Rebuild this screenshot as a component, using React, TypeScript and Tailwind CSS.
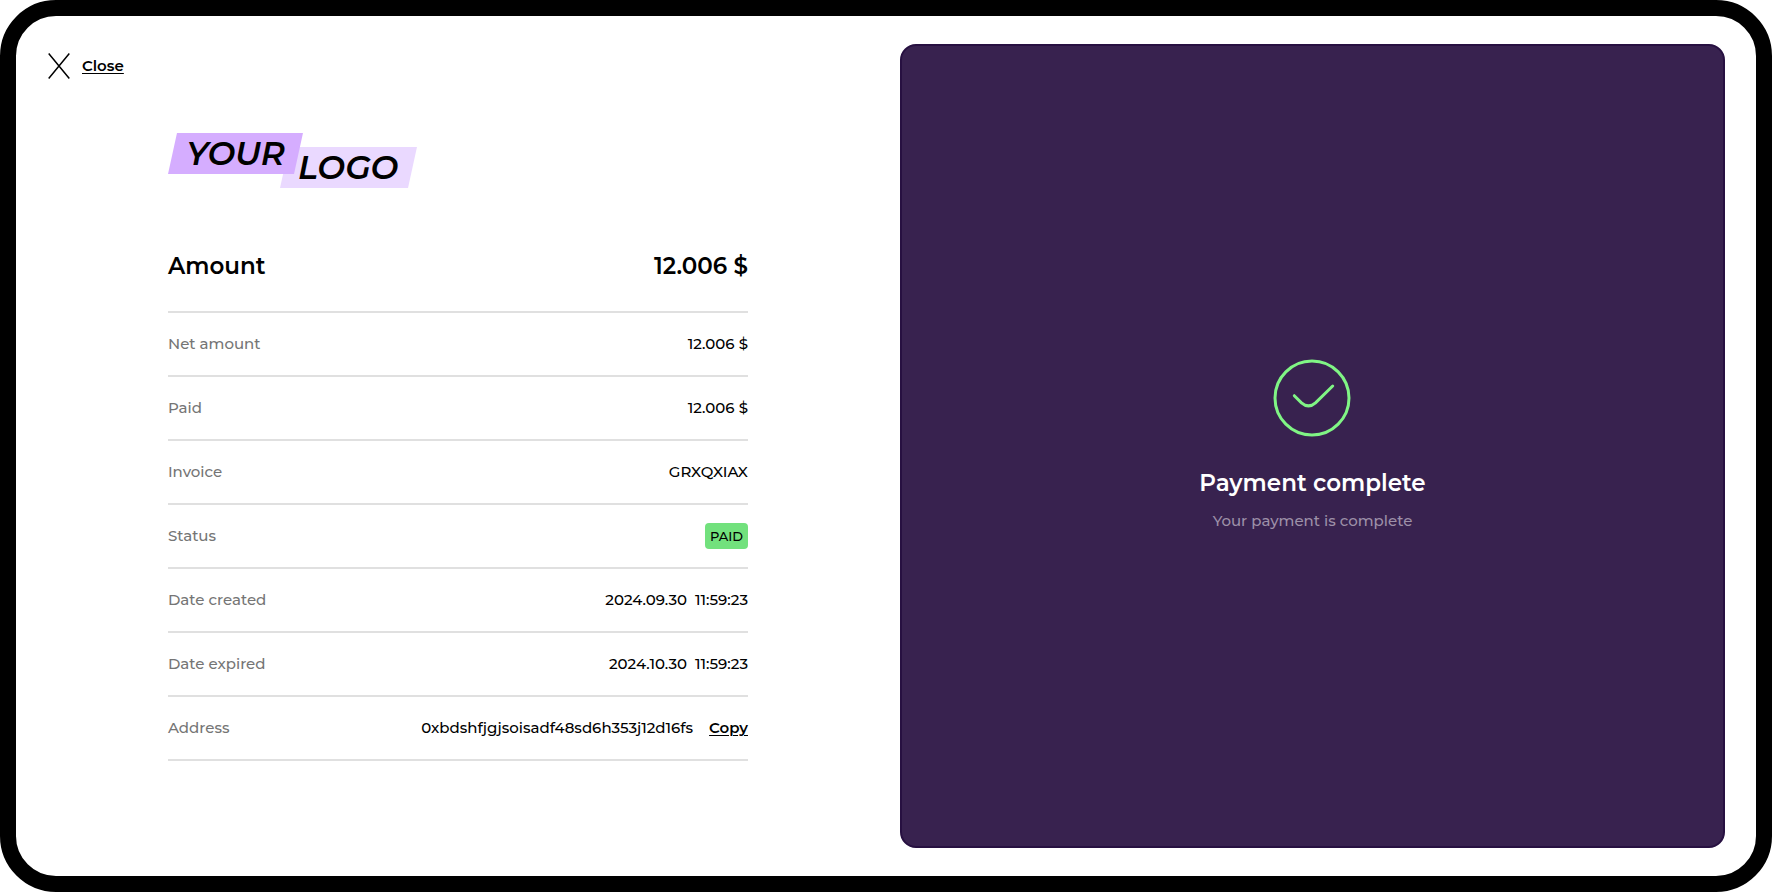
import type { ReactNode } from "react";

type Row = {
  label: string;
  value: ReactNode;
};

const rows: Row[] = [
  { label: "Net amount", value: "12.006 $" },
  { label: "Paid", value: "12.006 $" },
  { label: "Invoice", value: "GRXQXIAX" },
  {
    label: "Status",
    value: (
      <span className="block rounded bg-[#72e17d] px-[5px] text-[13px] leading-[26px]">
        PAID
      </span>
    ),
  },
  {
    label: "Date created",
    value: (
      <>
        <span>2024.09.30</span>
        <span>11:59:23</span>
      </>
    ),
  },
  {
    label: "Date expired",
    value: (
      <>
        <span>2024.10.30</span>
        <span>11:59:23</span>
      </>
    ),
  },
];

const address = "0xbdshfjgjsoisadf48sd6h353j12d16fs";

function Logo() {
  return (
    <svg width="250" height="56" viewBox="0 0 250 56" role="img" aria-label="Your logo">
      <polygon points="121,15 249,15 240,56 112,56" fill="#ead9ff" />
      <polygon points="9,1 135,1 126,42 0,42" fill="#d5adff" />
      <g
        className="font-['Montserrat','Inter',sans-serif] text-[33px] font-semibold italic"
        fill="#000"
      >
        <text x="18" y="33">YOUR</text>
        <text x="130" y="47">LOGO</text>
      </g>
    </svg>
  );
}

export default function App() {
  const handleCopy = () => {
    navigator.clipboard?.writeText(address);
  };

  return (
    <main className="grid min-h-screen grid-cols-[15fr_14fr] rounded-[56px] border-16 border-black bg-white py-7 pr-[31px] font-['Montserrat','Inter',sans-serif] text-[15px] leading-6 font-medium text-black">
      {/* Invoice details */}
      <section className="flex flex-col">
        <button type="button" className="ml-8 flex h-11 items-center gap-3 self-start">
          <svg width="22" height="26" viewBox="0 0 22 26" fill="none" stroke="#000" strokeWidth="1.5">
            <path d="M0.7 0.5L21.3 25.5M21.3 0.5L0.7 25.5" />
          </svg>
          <span className="font-semibold underline decoration-1 underline-offset-2">Close</span>
        </button>

        <div className="mx-auto mt-11 w-full max-w-[580px]">
          <Logo />

          <dl className="mt-8">
            <div className="flex h-[93px] items-center justify-between border-b-2 border-[#e0e0e0] text-[23px] font-semibold">
              <dt>Amount</dt>
              <dd>12.006 $</dd>
            </div>
            {rows.map((row) => (
              <div
                key={row.label}
                className="flex h-16 items-center justify-between border-b-2 border-[#e0e0e0]"
              >
                <dt className="text-[#757575]">{row.label}</dt>
                <dd className="flex gap-2">{row.value}</dd>
              </div>
            ))}
            <div className="flex h-16 items-center justify-between border-b-2 border-[#e0e0e0]">
              <dt className="text-[#757575]">Address</dt>
              <dd className="flex gap-4">
                {address}
                <button
                  type="button"
                  onClick={handleCopy}
                  className="font-semibold underline decoration-1 underline-offset-2"
                >
                  Copy
                </button>
              </dd>
            </div>
          </dl>
        </div>
      </section>

      {/* Payment status */}
      <section className="flex flex-col items-center justify-center rounded-2xl border-2 border-[#271041] bg-[#38224f]">
        <svg
          width="78"
          height="78"
          viewBox="0 0 78 78"
          fill="none"
          stroke="#80f585"
          strokeWidth="3"
          strokeLinecap="round"
        >
          <circle cx="39" cy="39" r="37" />
          <path d="M21.3 36.7L28.5 43.8Q35.5 50 42.5 43.8L59.7 27" />
        </svg>
        <h1 className="mt-8 text-[23px] leading-7 font-semibold text-white">Payment complete</h1>
        <p className="mt-3 text-[#9d90a8]">Your payment is complete</p>
      </section>
    </main>
  );
}
